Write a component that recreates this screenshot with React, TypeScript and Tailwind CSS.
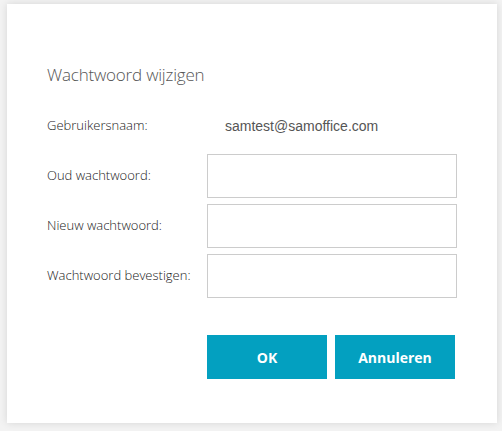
import React from "react";

const seg = { fontFamily: '"Open Sans", "Segoe UI", sans-serif' };

export default function App() {
  const rows = ["Oud wachtwoord:", "Nieuw wachtwoord:", "Wachtwoord bevestigen:"];
  return (
    <div className="w-[502px] h-[431px] bg-[#f3f3f3] pt-[4px] pl-[7px]">
      <div className="w-[490px] h-[419px] bg-white shadow-[0_0_8px_rgba(0,0,0,0.12)] pl-[40px] pt-[58px]">
        <div className="text-[17px] font-light text-[#555] leading-[26px] tracking-[-0.2px]" style={seg}>
          Wachtwoord wijzigen
        </div>
        <div className="flex items-center mt-[26px] h-[24px]">
          <div className="w-[160px] text-[13px] font-light text-[#222]" style={seg}>Gebruikersnaam:</div>
          <div className="pl-[18px] text-[14px] text-[#555]" style={{ fontFamily: '"Liberation Sans", Arial, sans-serif' }}>samtest@samoffice.com</div>
        </div>
        <div className="flex flex-col gap-[6px] mt-[16px]">
          {rows.map((r) => (
            <div key={r} className="flex items-center">
              <div className="w-[160px] text-[13px] font-light text-[#222]" style={seg}>{r}</div>
              <input type="password" className="w-[250px] h-[44px] border border-[#cccccc] bg-white outline-none" />
            </div>
          ))}
        </div>
        <div className="flex gap-[8px] ml-[160px] mt-[37px]">
          <button className="w-[120px] h-[44px] bg-[#03a0c0] text-white font-bold text-[14px]" style={seg}>OK</button>
          <button className="w-[120px] h-[44px] bg-[#03a0c0] text-white font-bold text-[14px]" style={seg}>Annuleren</button>
        </div>
      </div>
    </div>
  );
}
